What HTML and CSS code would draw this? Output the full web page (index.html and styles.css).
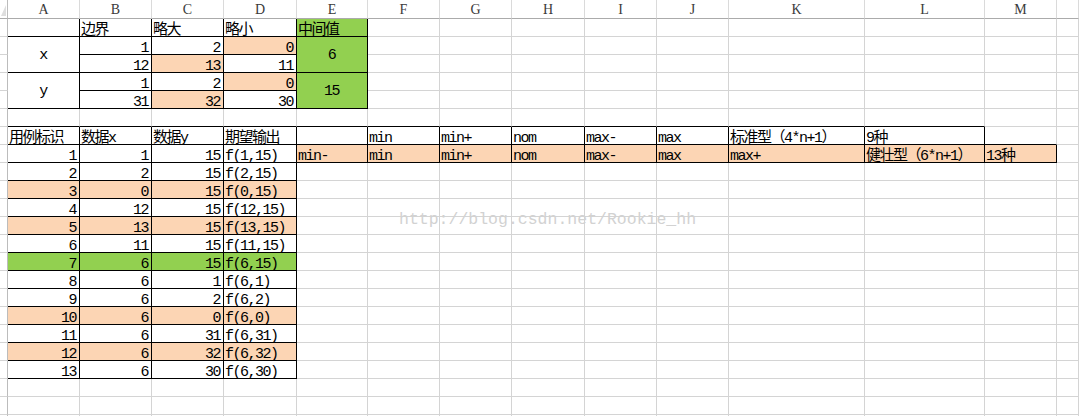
FILE: index.html
```html
<!DOCTYPE html>
<html lang="zh-CN">
<head>
<meta charset="utf-8">
<title>Sheet</title>
<link rel="stylesheet" href="styles.css">
</head>
<body>
<div class="sheet">
  <!-- column headers -->
  <div class="corner"><span class="tri"></span></div>
  <div class="h">A</div><div class="h">B</div><div class="h">C</div><div class="h">D</div><div class="h">E</div><div class="h">F</div><div class="h">G</div><div class="h">H</div><div class="h">I</div><div class="h">J</div><div class="h">K</div><div class="h">L</div><div class="h">M</div><div class="h"></div>

  <!-- row 1 -->
  <div class="g"></div>
  <div class="k"></div><div class="k">边界</div><div class="k">略大</div><div class="k">略小</div><div class="k gr">中间值</div>
  <div></div><div></div><div></div><div></div><div></div><div></div><div></div><div></div><div></div>

  <!-- row 2 -->
  <div class="g"></div>
  <div class="k c m2">x</div><div class="k r">1</div><div class="k r">2</div><div class="k r p">0</div><div class="k c gr m2">6</div>
  <div></div><div></div><div></div><div></div><div></div><div></div><div></div><div></div><div></div>

  <!-- row 3 -->
  <div class="g"></div>
  <div class="k r">12</div><div class="k r p">13</div><div class="k r">11</div>
  <div></div><div></div><div></div><div></div><div></div><div></div><div></div><div></div><div></div>

  <!-- row 4 -->
  <div class="g"></div>
  <div class="k c m2">y</div><div class="k r">1</div><div class="k r">2</div><div class="k r p">0</div><div class="k c gr m2">15</div>
  <div></div><div></div><div></div><div></div><div></div><div></div><div></div><div></div><div></div>

  <!-- row 5 -->
  <div class="g"></div>
  <div class="k r">31</div><div class="k r p">32</div><div class="k r">30</div>
  <div></div><div></div><div></div><div></div><div></div><div></div><div></div><div></div><div></div>

  <!-- row 6 -->
  <div class="g"></div>
  <div class="bo"></div><div class="bo"></div><div class="bo"></div><div class="bo"></div><div class="bo"></div><div class="bo"></div><div class="bo"></div><div class="bo"></div><div class="bo"></div><div class="bo"></div><div class="bo"></div><div class="bo"></div>
  <div></div><div></div>

  <!-- row 7 -->
  <div class="g"></div>
  <div class="k">用例标识</div><div class="k">数据x</div><div class="k">数据y</div><div class="k">期望输出</div><div class="k"></div>
  <div class="k">min</div><div class="k">min+</div><div class="k">nom</div><div class="k">max-</div><div class="k">max</div><div class="k">标准型（4*n+1）</div><div class="k">9种</div>
  <div class="bo"></div><div></div>

  <!-- row 8 -->
  <div class="g"></div>
  <div class="k r">1</div><div class="k r">1</div><div class="k r">15</div><div class="k">f(1,15)</div>
  <div class="k p">min-</div><div class="k p">min</div><div class="k p">min+</div><div class="k p">nom</div><div class="k p">max-</div><div class="k p">max</div><div class="k p">max+</div><div class="k p">健壮型（6*n+1）</div><div class="k p">13种</div>
  <div></div>

  <!-- row 9 -->
  <div class="g"></div>
  <div class="k r">2</div><div class="k r">2</div><div class="k r">15</div><div class="k">f(2,15)</div>
  <div></div><div></div><div></div><div></div><div></div><div></div><div></div><div></div><div></div><div></div>

  <!-- row 10 -->
  <div class="g"></div>
  <div class="k r p">3</div><div class="k r p">0</div><div class="k r p">15</div><div class="k p">f(0,15)</div>
  <div></div><div></div><div></div><div></div><div></div><div></div><div></div><div></div><div></div><div></div>

  <!-- row 11 -->
  <div class="g"></div>
  <div class="k r">4</div><div class="k r">12</div><div class="k r">15</div><div class="k">f(12,15)</div>
  <div></div><div></div><div></div><div></div><div></div><div></div><div></div><div></div><div></div><div></div>

  <!-- row 12 -->
  <div class="g"></div>
  <div class="k r p">5</div><div class="k r p">13</div><div class="k r p">15</div><div class="k p">f(13,15)</div>
  <div></div><div></div><div></div><div></div><div></div><div></div><div></div><div></div><div></div><div></div>

  <!-- row 13 -->
  <div class="g"></div>
  <div class="k r">6</div><div class="k r">11</div><div class="k r">15</div><div class="k">f(11,15)</div>
  <div></div><div></div><div></div><div></div><div></div><div></div><div></div><div></div><div></div><div></div>

  <!-- row 14 -->
  <div class="g"></div>
  <div class="k r gr">7</div><div class="k r gr">6</div><div class="k r gr">15</div><div class="k gr">f(6,15)</div>
  <div></div><div></div><div></div><div></div><div></div><div></div><div></div><div></div><div></div><div></div>

  <!-- row 15 -->
  <div class="g"></div>
  <div class="k r">8</div><div class="k r">6</div><div class="k r">1</div><div class="k">f(6,1)</div>
  <div></div><div></div><div></div><div></div><div></div><div></div><div></div><div></div><div></div><div></div>

  <!-- row 16 -->
  <div class="g"></div>
  <div class="k r">9</div><div class="k r">6</div><div class="k r">2</div><div class="k">f(6,2)</div>
  <div></div><div></div><div></div><div></div><div></div><div></div><div></div><div></div><div></div><div></div>

  <!-- row 17 -->
  <div class="g"></div>
  <div class="k r p">10</div><div class="k r p">6</div><div class="k r p">0</div><div class="k p">f(6,0)</div>
  <div></div><div></div><div></div><div></div><div></div><div></div><div></div><div></div><div></div><div></div>

  <!-- row 18 -->
  <div class="g"></div>
  <div class="k r">11</div><div class="k r">6</div><div class="k r">31</div><div class="k">f(6,31)</div>
  <div></div><div></div><div></div><div></div><div></div><div></div><div></div><div></div><div></div><div></div>

  <!-- row 19 -->
  <div class="g"></div>
  <div class="k r p">12</div><div class="k r p">6</div><div class="k r p">32</div><div class="k p">f(6,32)</div>
  <div></div><div></div><div></div><div></div><div></div><div></div><div></div><div></div><div></div><div></div>

  <!-- row 20 -->
  <div class="g"></div>
  <div class="k r">13</div><div class="k r">6</div><div class="k r">30</div><div class="k">f(6,30)</div>
  <div></div><div></div><div></div><div></div><div></div><div></div><div></div><div></div><div></div><div></div>

  <!-- rows 21-23 -->
  <div class="g"></div>
  <div></div><div></div><div></div><div></div><div></div><div></div><div></div><div></div><div></div><div></div><div></div><div></div><div></div><div></div>
  <div class="g"></div>
  <div></div><div></div><div></div><div></div><div></div><div></div><div></div><div></div><div></div><div></div><div></div><div></div><div></div><div></div>
  <div class="g"></div>
  <div></div><div></div><div></div><div></div><div></div><div></div><div></div><div></div><div></div><div></div><div></div><div></div><div></div><div></div>

  <div class="watermark">http://blog.csdn.net/Rookie_hh</div>
</div>
</body>
</html>
```

FILE: styles.css
```css
html, body {
  margin: 0;
  padding: 0;
  background: #ffffff;
  overflow: hidden;
}

.sheet {
  position: relative;
  display: grid;
  grid-template-columns: 8px 72px 72px 72px 73px 71px 72px 72px 73px 72px 72px 136px 120px 72px 1fr;
  grid-template-rows: 19px repeat(23, 18px);
  font-family: "Liberation Mono", "Noto Sans CJK SC", monospace;
  font-size: 15px;
  letter-spacing: -1.5px;
  color: #000000;
  text-spacing-trim: space-all;
}

.sheet > * {
  box-sizing: border-box;
  min-width: 0;
  display: flex;
  align-items: flex-end;
  padding: 0 2px 0 1px;
  line-height: 10px;
  white-space: nowrap;
  border-right: 1px solid #d4d4d4;
  border-bottom: 1px solid #d4d4d4;
}

.corner {
  border-right-color: #bcbcbc;
  border-bottom-color: #ababab;
  justify-content: flex-end;
  padding: 0 1px 2px 0;
}

.tri {
  width: 0;
  height: 0;
  border-left: 5px solid transparent;
  border-bottom: 11px solid #dedede;
}

.h {
  justify-content: center;
  padding: 0 0 3px 0;
  font-family: "Liberation Serif", serif;
  font-size: 14px;
  letter-spacing: 0;
  color: #3a3a3a;
  border-right-color: #dadada;
  border-bottom-color: #ababab;
}

.g {
  border-right-color: #bcbcbc;
}

.k {
  border-right-color: #000000;
  border-bottom-color: #000000;
}

.bo {
  border-bottom-color: #000000;
}

.r {
  justify-content: flex-end;
  padding-right: 3px;
}

.c {
  justify-content: center;
  align-items: center;
  padding-top: 3px;
}

.m2 {
  grid-row: span 2;
}

.p {
  background: #fcd5b4;
}

.gr {
  background: #92d050;
}

.sheet > .watermark {
  position: absolute;
  left: 399px;
  top: 210px;
  display: block;
  padding: 0;
  border: 0;
  font-size: 16.5px;
  line-height: 20px;
  letter-spacing: 0;
  color: #d2d2d2;
  pointer-events: none;
}
```
